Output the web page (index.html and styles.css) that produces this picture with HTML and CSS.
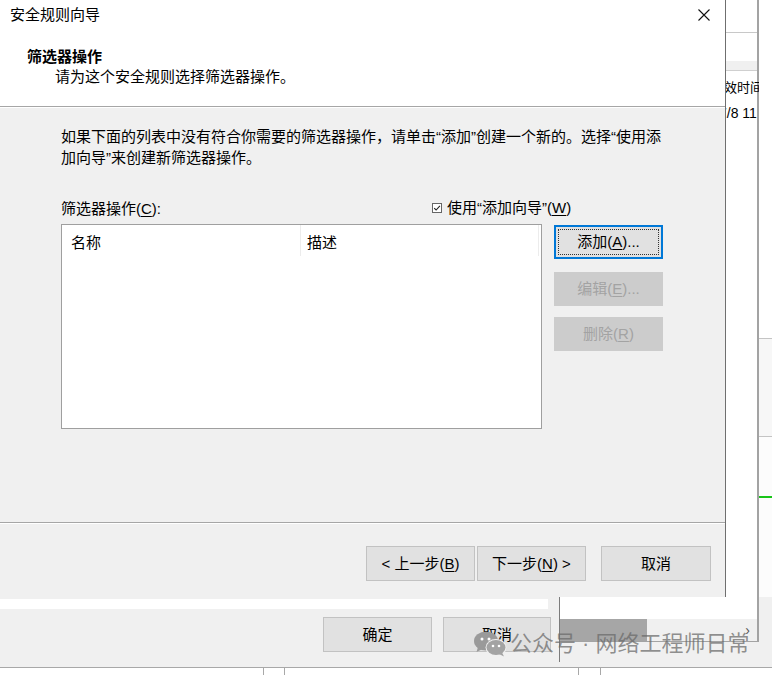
FILE: index.html
```html
<!DOCTYPE html>
<html lang="zh-CN">
<head>
<meta charset="utf-8">
<title>安全规则向导</title>
<link rel="stylesheet" href="styles.css">
</head>
<body>
<div class="screen">

  <div class="bg-bottom">
    <div class="bb-left">
      <div class="bb-strip"></div>
      <div class="bb-buttons">
        <button class="btn bb-ok">确定</button>
        <button class="btn bb-cancel">取消</button>
      </div>
    </div>
    <div class="bb-right"></div>
  </div>

  <div class="ticks">
    <div class="tk tk1"></div><div class="tk tk2"></div><div class="tk tk3"></div><div class="tk tk4"></div>
  </div>

  <div class="bg-right">
    <div class="bgr-top"></div>
    <div class="bgr-gap"></div>
    <div class="bgr-band"></div>
    <div class="bgr-head">生效时间</div>
    <div class="bgr-row">7/8 11</div>
    <div class="bgr-fill"></div>
    <div class="bgr-scroll">
      <div class="thumb"></div>
      <div class="track"><span class="arrow">›</span></div>
    </div>
  </div>

  <div class="bg-edge">
    <div class="edge-a"></div>
    <div class="edge-b"></div>
    <div class="edge-c"><div class="green"></div></div>
  </div>

  <div class="dialog">
    <div class="titlebar">
      <span class="title">安全规则向导</span>
      <span class="close">
        <svg width="12" height="12" viewBox="0 0 12 12"><path d="M0.5 0.5 L11.5 11.5 M11.5 0.5 L0.5 11.5" stroke="#111" stroke-width="1.1" fill="none"/></svg>
      </span>
    </div>
    <div class="header">
      <div class="h-title">筛选器操作</div>
      <div class="h-sub">请为这个安全规则选择筛选器操作。</div>
    </div>
    <div class="sep"></div>
    <div class="body">
      <p class="desc">如果下面的列表中没有符合你需要的筛选器操作，请单击“添加”创建一个新的。选择“使用添加向导”来创建新筛选器操作。</p>
      <div class="label-row">
        <span>筛选器操作(<u>C</u>):</span>
        <span class="chk">
          <svg class="box" width="10" height="10" viewBox="0 0 10 10"><rect x="0.5" y="0.5" width="9" height="9" fill="#fff" stroke="#666"/><path d="M2.2 5.1 L4.1 7 L7.9 2.9" stroke="#222" stroke-width="1.1" fill="none"/></svg>
          <span>使用“添加向导”(<u>W</u>)</span>
        </span>
      </div>
      <div class="list-area">
        <div class="list">
          <div class="list-head">
            <div class="col c1">名称</div>
            <div class="col c2">描述</div>
          </div>
        </div>
        <div class="side">
          <button class="btn side-btn focus">添加(<u>A</u>)...</button>
          <button class="btn side-btn disabled b2">编辑(<u>E</u>)...</button>
          <button class="btn side-btn disabled b3">删除(<u>R</u>)</button>
        </div>
      </div>
    </div>
    <div class="sep"></div>
    <div class="footer">
      <button class="btn fbtn">&lt; 上一步(<u>B</u>)</button>
      <button class="btn fbtn next">下一步(<u>N</u>) &gt;</button>
      <button class="btn fbtn cancel">取消</button>
    </div>
  </div>

  <div class="watermark">
    <svg class="wx" width="34" height="26" viewBox="0 0 34 26">
      <ellipse cx="13" cy="10" rx="12" ry="9.5" fill="#9a9a9a"/>
      <path d="M5 16 L3.5 21 L9.5 18 Z" fill="#9a9a9a"/>
      <ellipse cx="23" cy="16.5" rx="10.5" ry="8.5" fill="#f0f0f0"/>
      <ellipse cx="23" cy="16.5" rx="9.5" ry="7.6" fill="#a3a3a3"/>
      <path d="M29 21.5 L31 25.5 L26 23 Z" fill="#a3a3a3"/>
      <circle cx="9" cy="8" r="1.5" fill="#fff"/>
      <circle cx="16" cy="8" r="1.5" fill="#fff"/>
      <circle cx="20" cy="15" r="1.3" fill="#fff"/>
      <circle cx="26" cy="15" r="1.3" fill="#fff"/>
    </svg>
    <span class="wm-text">公众号 · 网络工程师日常</span>
  </div>

</div>
</body>
</html>
```

FILE: styles.css
```css
* { box-sizing: border-box; }
html, body { margin: 0; padding: 0; }
body {
  width: 772px;
  height: 675px;
  overflow: hidden;
  background: #fff;
  font-family: "Liberation Sans", "Noto Sans CJK SC", sans-serif;
  font-size: 15px;
  color: #000;
}
u { text-decoration: underline; text-underline-offset: 2px; text-decoration-thickness: 1px; }

.screen {
  position: relative;
  width: 772px;
  height: 675px;
  overflow: hidden;
  background: #fff;
}

/* generic button */
.btn {
  display: flex;
  align-items: center;
  justify-content: center;
  height: 34px;
  padding: 0;
  background: #e1e1e1;
  border: 1px solid #c2c2c2;
  font-family: inherit;
  font-size: 15px;
  line-height: 20px;
  color: #000;
}

/* ---------- background: bottom window ---------- */
.bg-bottom {
  position: absolute;
  left: 0;
  top: 597px;
  width: 772px;
  height: 71px;
  background: #f0f0f0;
  border-bottom: 1px solid #a8a8a8;
  display: flex;
}
.bb-left {
  width: 560px;
  height: 65px;
  border-right: 1px solid #7c7c7c;
  display: flex;
  flex-direction: column;
}
.bb-strip {
  width: 548px;
  height: 10px;
  margin-top: 2px;
  background: #fff;
}
.bb-buttons {
  display: flex;
  margin-top: 8px;
  padding-left: 323px;
  gap: 11px;
}
.bb-ok { width: 109px; height: 35px; }
.bb-cancel { width: 108px; height: 35px; }
.bb-right { flex: 1; }

.ticks {
  position: absolute;
  left: 0;
  top: 668px;
  width: 772px;
  height: 7px;
  display: flex;
}
.tk { height: 7px; border-right: 1px solid #a8a8a8; }
.tk1 { width: 264px; }
.tk2 { width: 21px; }
.tk3 { width: 294px; }
.tk4 { width: 22px; }

/* ---------- background: right window ---------- */
.bg-right {
  position: absolute;
  left: 560px;
  top: 0;
  width: 199px;
  height: 642px;
  background: #fff;
  border-right: 2px solid #a3a3a3;
  border-bottom: 1px solid #a3a3a3;
  display: flex;
  flex-direction: column;
}
.bgr-top { height: 33px; border-bottom: 1px solid #c8c8c8; flex: none; }
.bgr-gap { height: 28px; flex: none; }
.bgr-band { height: 10px; background: #f0f0f0; border-bottom: 1px solid #cfcfcf; flex: none; }
.bgr-head {
  flex: none;
  padding-left: 151px;
  margin-top: 7px;
  height: 20px;
  line-height: 20px;
  font-size: 13px;
  white-space: nowrap;
}
.bgr-row {
  flex: none;
  padding-left: 159px;
  margin-top: 5px;
  height: 20px;
  line-height: 20px;
  font-size: 14px;
  white-space: nowrap;
}
.bgr-fill { flex: 1; }
.bgr-scroll {
  flex: none;
  height: 22px;
  display: flex;
  background: #f0f0f0;
}
.thumb { width: 87px; background: #a6a6a6; }
.track {
  flex: 1;
  display: flex;
  justify-content: flex-end;
  align-items: center;
  padding-right: 7px;
}
.arrow { font-size: 14px; line-height: 14px; color: #555; }

/* ---------- background: far right edge ---------- */
.bg-edge {
  position: absolute;
  left: 759px;
  top: 0;
  width: 13px;
  height: 597px;
  display: flex;
  flex-direction: column;
  background: #fff;
}
.edge-a { height: 339px; background: #fff; border-bottom: 1px solid #c4c4c4; }
.edge-b { height: 98px; background: #f7f7f7; border-bottom: 1px solid #c4c4c4; }
.edge-c { flex: 1; background: #fcfcfc; padding-top: 59px; }
.green { height: 2px; background: #19c519; }

/* ---------- dialog ---------- */
.dialog {
  position: absolute;
  left: 0;
  top: 0;
  width: 726px;
  height: 597px;
  background: #f0f0f0;
  border-right: 1px solid #6f6f6f;
  display: flex;
  flex-direction: column;
}
.titlebar {
  height: 32px;
  background: #fff;
  display: flex;
  align-items: flex-start;
  justify-content: space-between;
  flex: none;
}
.title {
  padding-left: 10px;
  line-height: 30px;
  font-size: 15px;
}
.close {
  display: flex;
  margin-top: 9px;
  margin-right: 15px;
}
.header {
  height: 74px;
  background: #fff;
  padding: 15px 0 0 27px;
  flex: none;
}
.h-title {
  font-weight: 700;
  font-size: 15px;
  line-height: 20px;
}
.h-sub {
  padding-left: 28px;
  line-height: 20px;
  font-size: 15px;
}
.sep {
  flex: none;
  height: 2px;
  background: #a6a6a6;
  border-bottom: 1px solid #fff;
}
.body {
  height: 414px;
  flex: none;
  padding-left: 61px;
}
.desc {
  margin: 18px 0 0 0;
  width: 610px;
  line-height: 21px;
  font-size: 15px;
}
.label-row {
  margin-top: 31px;
  height: 20px;
  line-height: 20px;
  display: grid;
  grid-template-columns: 371px auto;
}
.chk {
  display: flex;
  align-items: center;
  gap: 5px;
  margin-top: -3px;
}
.box { flex: none; }
.list-area {
  margin-top: 5px;
  display: flex;
  align-items: flex-start;
}
.list {
  width: 481px;
  height: 205px;
  background: #fff;
  border: 1px solid #9f9f9f;
}
.list-head {
  display: flex;
  height: 31px;
}
.col {
  padding-top: 8px;
  line-height: 20px;
  border-right: 1px solid #ececec;
}
.c1 { width: 239px; padding-left: 9px; }
.c2 { width: 238px; padding-left: 6px; }
.side {
  margin-left: 12px;
  margin-top: 1px;
  display: flex;
  flex-direction: column;
}
.side-btn { width: 109px; }
.focus {
  position: relative;
  border: 1px solid #0078d7;
  box-shadow: inset 0 0 0 1px #0078d7;
}
.focus::after {
  content: "";
  position: absolute;
  left: 3px;
  top: 3px;
  right: 3px;
  bottom: 3px;
  border: 1px dotted #333;
}
.disabled {
  background: #cccccc;
  border-color: #cccccc;
  color: #a3a3a3;
}
.b2 { margin-top: 13px; }
.b3 { margin-top: 11px; }

.footer {
  flex: 1;
  display: flex;
  justify-content: flex-end;
  align-items: flex-start;
  padding: 22px 14px 0 0;
  gap: 2px;
}
.fbtn { width: 109px; height: 35px; }
.fbtn.cancel { width: 110px; margin-left: 13px; }

/* ---------- watermark ---------- */
.watermark {
  position: absolute;
  left: 473px;
  top: 630px;
  display: flex;
  align-items: center;
  gap: 3px;
}
.wx { flex: none; }
.wm-text {
  font-size: 22px;
  line-height: 28px;
  color: rgba(105, 105, 105, 0.72);
  white-space: nowrap;
}
```
